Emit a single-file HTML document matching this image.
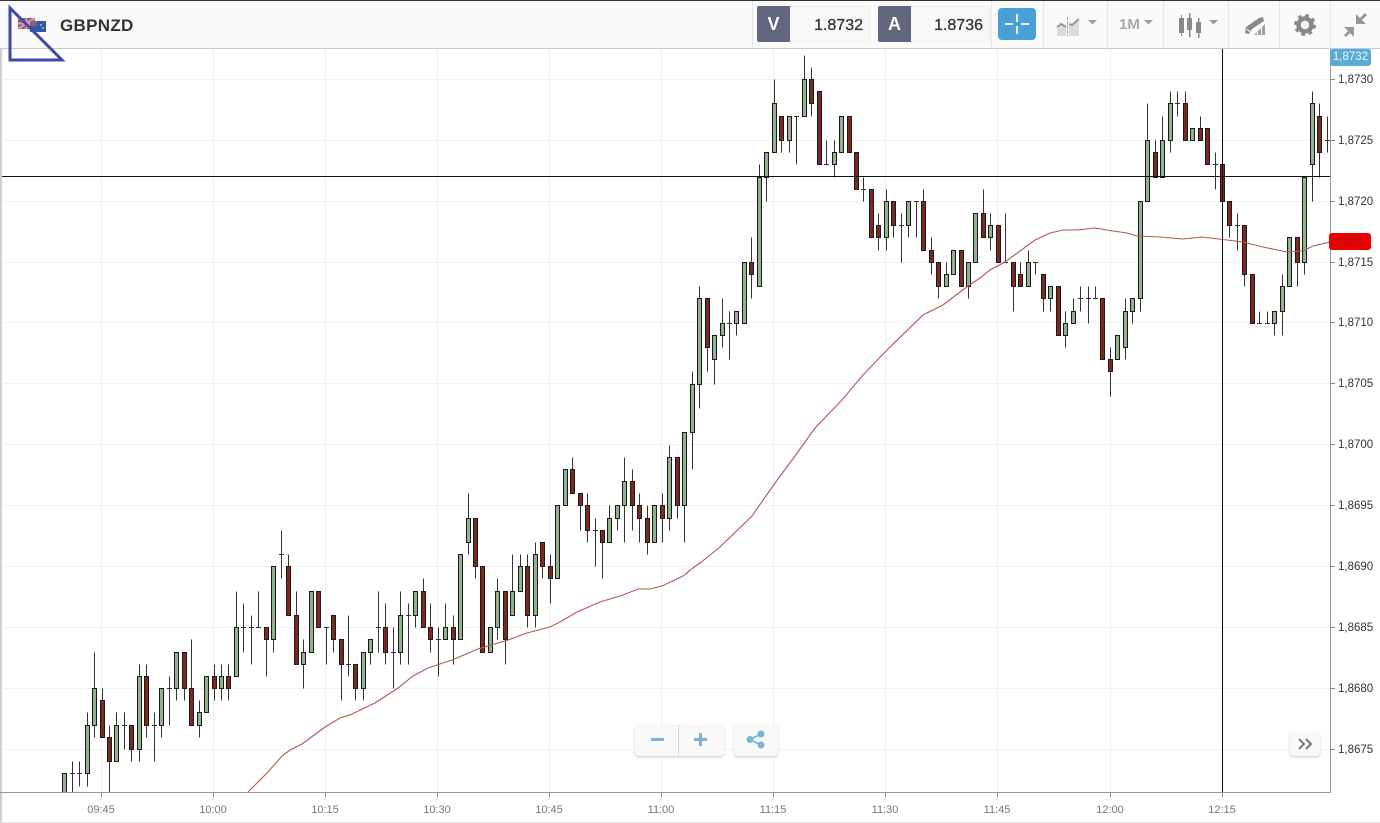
<!DOCTYPE html>
<html><head><meta charset="utf-8"><title>GBPNZD</title>
<style>
html,body{margin:0;padding:0;background:#fff;width:1380px;height:823px;overflow:hidden}
body{position:relative;font-family:"Liberation Sans",sans-serif}
div{position:absolute;box-sizing:border-box}
svg{position:absolute;left:0;top:0}
#top{left:0;top:0;width:1380px;height:49px;background:#fafafa;border-top:1px solid #333;border-bottom:1px solid #c8c8c8}
.sep{top:1px;width:1px;height:47px;background:#e6e6e6}
.vl{top:6px;width:33px;height:36px;background:#62667e;color:#fff;font-size:18px;font-weight:bold;text-align:center;line-height:37px;border-radius:2px 0 0 2px}
.vb{top:6px;height:36px;background:#f8f8f8;border:1px solid #efefef;border-left:0;border-radius:0 3px 3px 0;color:#333;font-size:16px;line-height:37px;text-align:right;padding-right:6px;-webkit-text-stroke:.3px #333}
.xl{top:804px;font-size:11px;color:#777;width:50px;text-align:center;line-height:13px}
.yl{left:1338px;font-size:11.5px;color:#333;line-height:14px}
.btn{background:#f9f9f9;border-radius:4px;box-shadow:0 1px 2px #c4c4c4}
</style></head><body>
<svg id="c" width="1380" height="823" xmlns="http://www.w3.org/2000/svg"></svg>

<div id="top"></div>
<div class="sep" style="left:752px"></div><div class="sep" style="left:991px"></div><div class="sep" style="left:1043px"></div><div class="sep" style="left:1107px"></div><div class="sep" style="left:1163px"></div><div class="sep" style="left:1228px"></div><div class="sep" style="left:1279px"></div><div class="sep" style="left:1330px"></div>
<div style="left:60px;top:15px;font-size:17px;font-weight:bold;color:#333;line-height:21px;letter-spacing:.3px">GBPNZD</div>
<div class="vl" style="left:757px">V</div><div class="vb" style="left:790px;width:80px">1.8732</div>
<div class="vl" style="left:878px">A</div><div class="vb" style="left:911px;width:79px">1.8736</div>
<div style="left:998px;top:8px;width:38px;height:32px;background:#4a9fd8;border-radius:4px"></div>
<div style="left:1119px;top:16px;font-size:15px;font-weight:bold;color:#aaa;line-height:18px">1M</div>

<svg width="1380" height="60" xmlns="http://www.w3.org/2000/svg">
<path d="M1017 14v8M1017 26v8M1005 24h8M1021 24h8" stroke="#dff0fa" stroke-width="2" fill="none"/>
<!-- flag -->
<rect x="18" y="18" width="17" height="11" fill="#7d5f80"/>
<path d="M18 18l17 11M35 18l-17 11M26.500 18v11M18 23.500h17" stroke="#e59aa8" stroke-width="2"/>
<rect x="30" y="21" width="16" height="11" fill="#2f5aa8"/>
<rect x="30" y="21" width="7" height="5" fill="#8c5f78"/>
<circle cx="41" cy="25" r="1" fill="#e8a0a8"/><circle cx="43" cy="28" r="1" fill="#e8a0a8"/>
<!-- chart type -->
<path d="M1057 36V27l4-3 5 3v9zM1069 36V24l3 1 7-6v17z" fill="#dcdcdc"/>
<path d="M1057 27l4-3 5 3M1069 24l3 1 7-6" stroke="#999" stroke-width="2" fill="none"/>
<path d="M1067.500 17v19" stroke="#999" stroke-width="1" stroke-dasharray="3 1.500" fill="none"/>
<path d="M1088 20h9l-4.500 4.500z" fill="#999"/>
<path d="M1144 20h9l-4.500 4.500z" fill="#999"/>
<path d="M1209 20h9l-4.500 4.500z" fill="#999"/>
<!-- candles -->
<g fill="#888"><rect x="1179" y="18" width="5" height="15"/><rect x="1181" y="15" width="1" height="21"/><rect x="1187" y="18" width="5" height="12"/><rect x="1189" y="13" width="1.500" height="24"/><rect x="1196" y="22" width="5" height="11"/><rect x="1198" y="18" width="1.500" height="20"/></g>
<!-- pencil -->
<path d="M1245 33l1-6 13-9 4-1 1 4-12 8-3 5z" fill="#8a8a8a"/><path d="M1247 29l3 3" stroke="#fafafa" stroke-width="1"/>
<path d="M1254 35l3-3v3zM1258 35v-4l3-3v7zM1262 35v-8l3-3v11z" fill="#a0a0a0"/>
<!-- gear -->
<circle cx="1305" cy="25" r="6.500" fill="none" stroke="#888" stroke-width="4.500"/>
<circle cx="1305" cy="25" r="9.500" fill="none" stroke="#888" stroke-width="3" stroke-dasharray="3.600 3.860"/>
<!-- compress -->
<path d="M1356 14v10h10zM1354 27h-10l10 10z" fill="#999"/>
<path d="M1359 21l7-7M1351 30l-6 6" stroke="#999" stroke-width="3" fill="none"/>
</svg>

<div class="yl" style="top:73px">1,8730</div>
<div class="yl" style="top:134px">1,8725</div>
<div class="yl" style="top:195px">1,8720</div>
<div class="yl" style="top:256px">1,8715</div>
<div class="yl" style="top:316px">1,8710</div>
<div class="yl" style="top:377px">1,8705</div>
<div class="yl" style="top:438px">1,8700</div>
<div class="yl" style="top:499px">1,8695</div>
<div class="yl" style="top:560px">1,8690</div>
<div class="yl" style="top:621px">1,8685</div>
<div class="yl" style="top:682px">1,8680</div>
<div class="yl" style="top:743px">1,8675</div>
<div style="left:1330px;top:49px;width:41px;height:17px;background:#5aabd3;border-radius:3px;color:#e8f4fa;font-size:11.5px;line-height:17px;text-align:center">1,8732</div>
<div style="left:1329px;top:233px;width:42px;height:17px;background:#ee0000;border-radius:3px;color:#a01818;font-size:11.5px;line-height:18px;text-align:center">1,8717</div>

<div class="xl" style="left:76px">09:45</div>
<div class="xl" style="left:188px">10:00</div>
<div class="xl" style="left:300px">10:15</div>
<div class="xl" style="left:412px">10:30</div>
<div class="xl" style="left:524px">10:45</div>
<div class="xl" style="left:636px">11:00</div>
<div class="xl" style="left:748px">11:15</div>
<div class="xl" style="left:860px">11:30</div>
<div class="xl" style="left:972px">11:45</div>
<div class="xl" style="left:1085px">12:00</div>
<div class="xl" style="left:1197px">12:15</div>

<div class="btn" style="left:635px;top:725px;width:89px;height:31px"></div>
<div style="left:678px;top:725px;width:1px;height:31px;background:#d8d8d8"></div>
<div class="btn" style="left:734px;top:725px;width:44px;height:31px"></div>
<div class="btn" style="left:1290px;top:732px;width:30px;height:24px"></div>
<svg width="1380" height="823" xmlns="http://www.w3.org/2000/svg">
<path d="M651 739.500h13M694 739.500h13M700.500 733v13" stroke="#7ab3d3" stroke-width="3" fill="none"/>
<g fill="#7ab3d3"><circle cx="761" cy="734" r="3.500"/><circle cx="750" cy="739.500" r="3.500"/><circle cx="761" cy="745" r="3.500"/></g>
<path d="M761 734l-11 5.500 11 5.500" stroke="#7ab3d3" stroke-width="1.800" fill="none"/>
<path d="M1299 739l5 5-5 5M1306 739l5 5-5 5" stroke="#777" stroke-width="2" fill="none"/>
<path d="M10 8V60H62Z" fill="none" stroke="#3f48a6" stroke-width="3"/>
</svg>

<script>
var D="G 73 69 73 69|D 73 73 74 71|D 73 73 74 72|G 77 73 78 72|G 80 77 83 76|R 79 76 80 76|R 76 74 77 70|G 77 74 78 74|D 77 77 78 75|R 77 75 77 74|G 81 75 82 74|R 81 77 82 76|D 77 77 78 74|G 80 77 80 76|D 80 80 81 77|G 83 80 83 79|R 83 80 83 79|R 80 77 84 77|G 78 77 79 76|G 81 78 81 78|R 81 80 82 79|G 81 80 82 79|R 81 80 82 79|G 85 81 88 81|D 85 85 87 83|D 85 85 86 82|D 85 85 88 85|R 85 84 85 81|G 90 84 90 83|D 91 91 93 89|R 90 86 91 86|R 86 82 88 82|G 83 82 84 80|G 88 83 88 83|R 88 85 88 85|D 85 85 85 82|R 86 84 86 83|R 84 82 84 79|D 82 82 86 81|R 82 80 82 79|G 83 80 83 79|G 84 83 84 82|D 85 85 88 83|R 85 83 87 82|D 83 83 85 80|G 86 83 88 82|D 86 86 87 82|G 88 86 88 85|R 88 85 89 85|R 85 84 87 83|D 84 84 85 81|G 85 84 87 84|R 85 84 86 82|G 91 84 91 84|G 94 92 96 91|R 94 90 94 89|R 90 83 90 83|G 85 83 85 83|G 88 85 89 84|R 88 84 88 82|G 88 86 91 86|G 90 88 91 88|R 90 86 91 85|G 91 86 92 85|R 92 90 92 89|R 90 89 91 87|G 95 89 95 89|G 98 95 98 95|R 98 96 99 96|R 96 95 96 93|R 95 93 96 92|D 93 93 94 90|R 93 92 93 89|G 94 92 95 92|G 95 94 95 93|G 97 95 99 92|R 97 95 98 93|R 95 94 96 92|R 94 92 95 91|G 95 92 95 92|R 95 94 96 92|G 99 94 100 93|R 99 95 99 94|G 101 95 101 92|G 105 101 106 98|G 112 105 113 103|R 112 108 112 106|G 109 107 109 105|G 110 109 112 108|D 110 110 111 107|G 111 110 111 109|G 115 110 115 110|R 115 114 117 112|G 122 113 123 113|G 124 122 124 120|G 128 124 130 124|R 127 125 127 124|G 127 125 127 124|D 127 127 127 123|G 130 127 132 127|R 130 128 131 127|R 129 123 129 123|D 123 123 125 123|G 124 123 125 122|G 127 124 127 124|R 127 124 127 124|R 124 121 124 121|D 121 121 122 120|R 121 117 121 117|R 118 117 119 116|G 120 117 121 116|R 120 118 120 117|D 118 118 119 115|G 120 118 120 117|D 120 120 120 117|R 120 116 121 116|R 116 115 117 114|R 115 113 115 112|G 114 113 115 113|G 116 114 116 114|R 116 113 116 113|G 115 113 115 112|G 119 115 119 115|R 119 117 121 117|G 118 117 119 116|R 118 115 118 115|D 115 115 119 115|R 115 113 115 111|R 114 113 115 113|G 115 113 116 113|D 115 115 115 114|R 114 112 114 111|G 113 112 113 111|R 113 109 113 109|G 110 109 111 108|G 111 110 112 110|D 112 112 113 111|D 112 112 113 110|D 112 112 113 112|R 112 107 112 107|R 107 106 108 104|G 109 107 109 107|G 111 108 112 107|G 112 111 112 110|G 120 112 120 111|G 125 120 128 120|R 124 122 125 122|G 125 122 127 122|G 128 125 129 124|D 128 128 129 127|R 128 125 129 125|G 126 125 126 125|R 126 125 127 125|R 126 123 126 123|D 123 123 124 121|R 123 120 123 120|R 120 118 120 117|D 118 118 119 116|R 118 114 118 113|R 114 110 114 110|D 110 110 111 110|D 110 110 111 110|G 111 110 111 109|G 113 111 114 109|G 117 113 117 113|R 117 115 117 113|G 122 115 122 114|G 128 123 129 120|R 127 124 128 122|D 125 125 127 124".split("|");
function Y(p){return Math.round(749-(p-75)*12.18)+.5}
function X(i){return Math.round(101.5+i*7.47)+.5}
var s='';
var prices=[79,140,201,262,322,383,444,505,566,627,688,749],times=[101,213,325,437,549,661,773,885,997,1110,1222];
prices.forEach(function(y){s+='<path d="M2 '+(y+.5)+'H1330" stroke="#f1f1f1"/><path d="M1330 '+(y+.5)+'h5" stroke="#888"/>'});
times.forEach(function(x){s+='<path d="M'+(x+.5)+' 49V792" stroke="#efefef"/><path d="M'+(x+.5)+' 792v5" stroke="#888"/>'});
s+='<path d="M0.500 49V823" stroke="#c8c8c8"/><path d="M1.500 49V823" stroke="#dcdcdc"/><path d="M2.500 49V823" stroke="#f0f0f0"/>';
s+='<clipPath id="k"><rect x="2" y="49" width="1328" height="743"/></clipPath><g clip-path="url(#k)">';
D.forEach(function(r,n){var a=r.split(" "),t=a[0],o=+a[1],c=+a[2],h=+a[3],l=+a[4],x=X(n-5);
s+='<path d="M'+x+' '+Y(h)+'V'+Y(l)+'" stroke="#333"/>';
if(t=="D")s+='<path d="M'+(x-2.5)+' '+Y(o)+'h5" stroke="#333"/>';
else s+='<rect x="'+(x-2)+'" y="'+Y(o)+'" width="4" height="'+(Y(c)-Y(o))+'" fill="'+(t=="G"?"#93b18c":"#7b2a20")+'" stroke="#1a1a1a"/>';});
s+='<path d="M248 792L267 773 282 756 290 750 302 744 325 727 340 718 350 715 375 703 398 688 413 676 428 668 452 660 478 649 508 640 527 633 550 627 560 622 577 612 600 602 623 595 638 589 650 589 662 586 683 576 693 568 700 563 720 547 752 516 775 483 795 456 815 428 842 400 863 375 887 350 923 315 943 305 968 286 980 278 990 270 1005 262 1035 240 1050 233 1063 230 1077 230 1095 228 1113 231 1127 233 1137 236 1160 237 1183 239 1202 237 1227 240 1243 242 1263 247 1287 252 1303 251 1313 246 1330 242" fill="none" stroke="#b9564e" stroke-width="1.100"/>';
s+='</g>';
s+='<path d="M1330.500 49V793M0 792.500H1331" stroke="#999" fill="none"/><path d="M0 822.500H1380" stroke="#e4e4e4"/>';
s+='<path d="M2 176.500H1330M1222.500 48V792" stroke="#111" fill="none"/>';
document.getElementById("c").innerHTML=s;
</script>
</body></html>
